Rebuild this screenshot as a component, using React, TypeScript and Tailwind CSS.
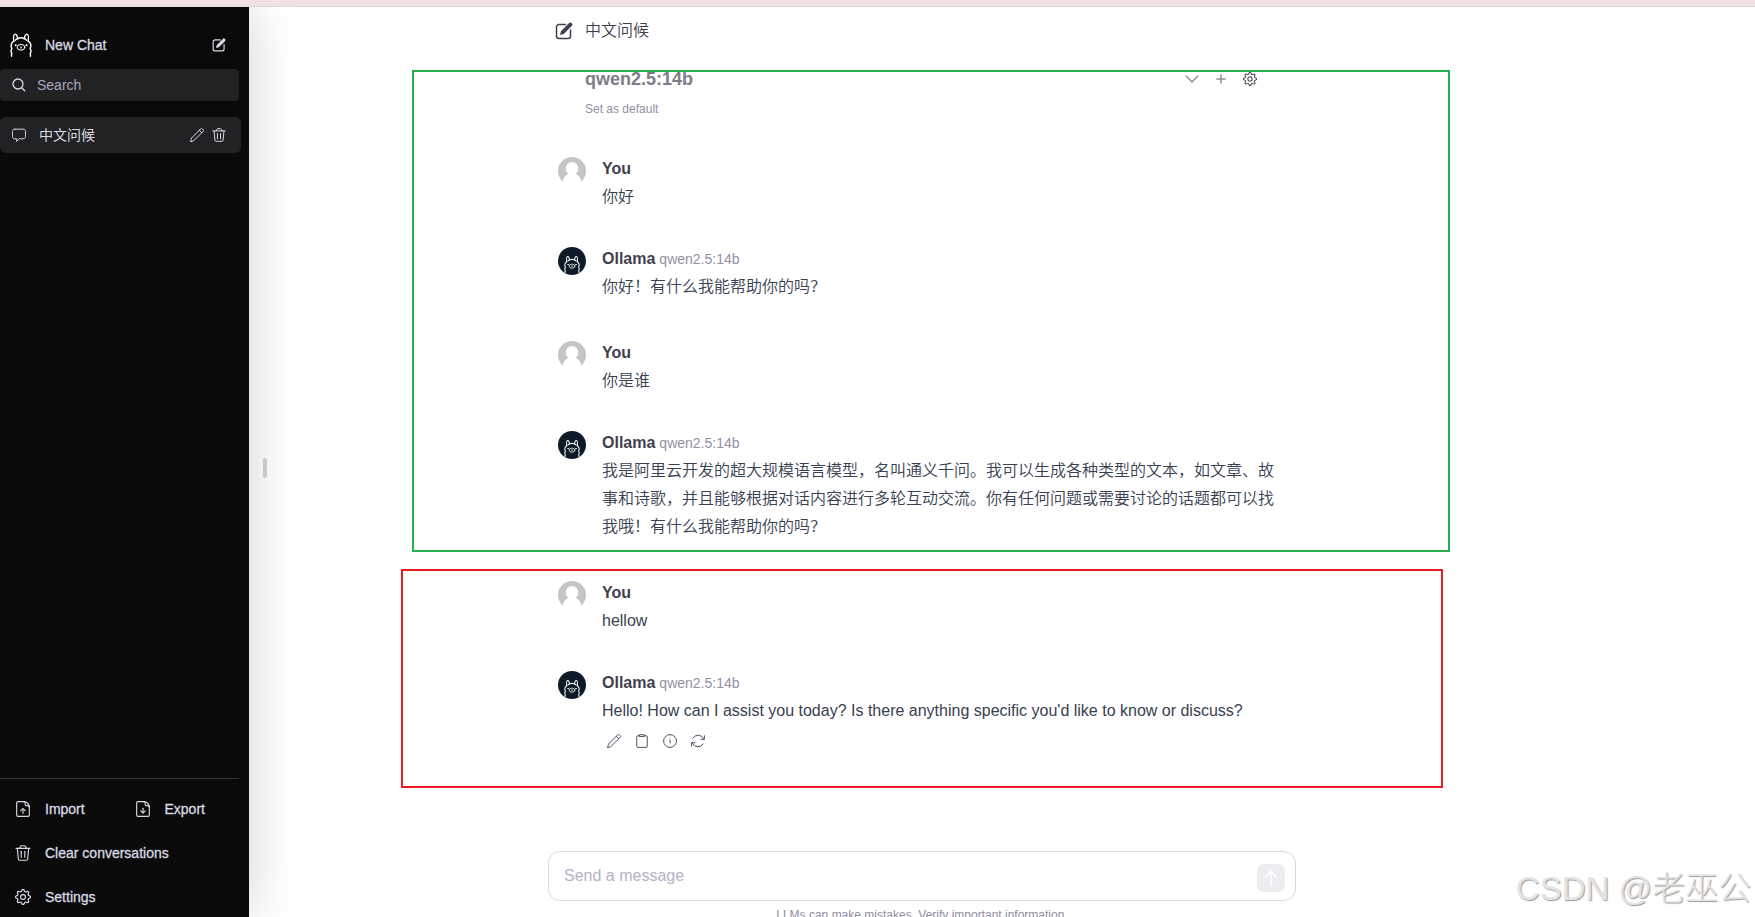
import React from "react";

type IconProps = { className?: string; d: string[]; bold?: boolean };

function Line({ className = "", d, bold }: IconProps) {
  return (
    <svg viewBox="0 0 24 24" fill="none" stroke="currentColor" strokeWidth={bold ? 2.6 : 1.7} strokeLinecap="round" strokeLinejoin="round" className={className} aria-hidden="true">
      {d.map((p) => (
        <path key={p} d={p} />
      ))}
    </svg>
  );
}

const PENCIL = ["M1 23l1.600-5.800L18.200 1.600a2.100 2.100 0 0 1 3 0l1.200 1.200a2.100 2.100 0 0 1 0 3L6.800 21.400z", "M16 4l4 4"];
const TRASH = ["M1.5 5h21", "M7 5l1.200-2.800A1.5 1.5 0 0 1 9.600 1.200h4.800a1.500 1.500 0 0 1 1.400 1L17 5", "M3.500 5l1.500 16a2 2 0 0 0 2 1.800h10a2 2 0 0 0 2-1.800L20.500 5", "M9.300 9.500v9", "M14.700 9.500v9"];
const CHAT = ["M5 2h14c2.700 0 4.200 1.500 4.200 4v8.500c0 2.500-1.500 4-4.200 4h-6.500L8 23v-4.500H5c-2.700 0-4.200-1.500-4.200-4V6c0-2.500 1.500-4 4.200-4z"];
const FILE = ["M13 1H4.500a2 2 0 0 0-2 2v18a2 2 0 0 0 2 2h15a2 2 0 0 0 2-2V9.500c0-5-3.500-8.500-8.500-8.500z", "M13 1c1.800 0 2.300 1.200 2.300 3v1.200c0 1.200.600 1.800 1.800 1.800h1.200c2 0 3.200.800 3.200 2.500"];
const UP = ["M12 18.500v-6.500", "M8.800 14.500l3.200-3.200 3.200 3.200"];
const DOWN = ["M12 11v6.500", "M8.800 14.800l3.200 3.200 3.200-3.200"];
const CLIP = ["M8 3H5a2 2 0 0 0-2 2v16a2 2 0 0 0 2 2h14a2 2 0 0 0 2-2V5a2 2 0 0 0-2-2h-3", "M8 1.200h8v3H8z"];
const INFO = ["M12 1a11 11 0 1 0 0 22a11 11 0 1 0 0-22z", "M11.300 11.500h1v4", "M12 8.500v.200"];
const REFRESH = ["M23 3v6h-6", "M22 8.500A10.800 10.800 0 0 0 3 7", "M1 21v-6h6", "M2 15.500A10.800 10.800 0 0 0 21 17"];

function Gear({ className = "" }: { className?: string }) {
  const points = Array.from({ length: 64 }, (_, i) => {
    const a = (i / 64) * Math.PI * 2;
    const r = 9.8 + 1.4 * Math.tanh(2.2 * Math.cos(8 * a));
    return `${(12 + r * Math.sin(a)).toFixed(2)},${(12 - r * Math.cos(a)).toFixed(2)}`;
  }).join(" ");
  return (
    <svg viewBox="0 0 24 24" fill="none" stroke="currentColor" strokeWidth="1.800" strokeLinejoin="round" className={className} aria-hidden="true">
      <polygon points={points} />
      <circle cx="12" cy="12" r="3.700" />
    </svg>
  );
}

function Compose({ className = "" }: { className?: string }) {
  return (
    <svg viewBox="0 0 18 18" fill="none" className={className} aria-hidden="true">
      <path d="M10.500 2.500H4A2.500 2.500 0 0 0 1.500 5v9A2.500 2.500 0 0 0 4 16.500h9a2.500 2.500 0 0 0 2.500-2.500V8" stroke="currentColor" strokeWidth="1.500" strokeLinecap="round" />
      <path d="M5 13l1-3.800 7.800-8a2 2 0 0 1 2.900 0 2 2 0 0 1 0 2.900L8.800 12z" fill="currentColor" />
    </svg>
  );
}

function Llama({ className = "" }: { className?: string }) {
  return (
    <svg viewBox="0 0 22 24" fill="none" stroke="currentColor" strokeWidth="1.400" strokeLinecap="round" strokeLinejoin="round" className={className} aria-hidden="true">
      <path d="M3.800 8.200C3.300 4.500 3.600 1.300 5 1.100c1.500-.200 2.400 1.900 2.600 4.600" />
      <path d="M18.200 8.200c.500-3.700.200-6.900-1.200-7.100-1.500-.200-2.400 1.900-2.600 4.600" />
      <path d="M5.300 7.300c.700-1.100 1.500-1.600 2.500-1.500C9.300 4.300 12.700 4.300 14.200 5.800c1-.100 1.800.400 2.500 1.500" />
      <path d="M3.800 8.200C1 9.800.500 13 1.900 15.400.800 17.300.900 19.300 1.900 20.700c-.500.800-.600 1.600-.300 2.500" />
      <path d="M18.200 8.200c2.800 1.600 3.300 4.800 1.900 7.200 1.100 1.900 1 3.900 0 5.300.500.800.600 1.600.300 2.500" />
      <ellipse cx="11" cy="14.300" rx="3.900" ry="2.900" strokeWidth="1" />
      <path d="M10.200 13.900l.800.600.8-.600M11 14.500v.900" strokeWidth=".800" />
      <circle cx="5.600" cy="12.200" r=".600" fill="currentColor" strokeWidth=".800" />
      <circle cx="16.400" cy="12.200" r=".600" fill="currentColor" strokeWidth=".800" />
    </svg>
  );
}

function Avatar({ user }: { user: boolean }) {
  if (!user) {
    return (
      <div className="flex size-7 shrink-0 items-end justify-center overflow-hidden rounded-full bg-[#0d1b28] text-white">
        <Llama className="h-[21px] w-4" />
      </div>
    );
  }
  return (
    <svg viewBox="0 0 28 28" className="size-7 shrink-0" aria-hidden="true">
      <circle cx="14" cy="14" r="14" fill="#c5c5c5" />
      <path d="M14 5a6.200 6.200 0 0 0-6.200 6.200c0 2.500 1 4.500 2.400 5.600C7.300 18 5.300 21 4.500 24.500V28h19v-3.500c-.800-3.500-2.800-6.500-5.700-7.700 1.400-1.100 2.400-3.100 2.400-5.600A6.200 6.200 0 0 0 14 5z" fill="#fff" />
    </svg>
  );
}

type Message = { user: boolean; text: string };

const messages: Message[] = [
  { user: true, text: "你好" },
  { user: false, text: "你好！有什么我能帮助你的吗？" },
  { user: true, text: "你是谁" },
  { user: false, text: "我是阿里云开发的超大规模语言模型，名叫通义千问。我可以生成各种类型的文本，如文章、故事和诗歌，并且能够根据对话内容进行多轮互动交流。你有任何问题或需要讨论的话题都可以找我哦！有什么我能帮助你的吗？" },
  { user: true, text: "hellow" },
  { user: false, text: "Hello! How can I assist you today? Is there anything specific you'd like to know or discuss?" },
];

const actions = [
  { label: "Edit", d: PENCIL },
  { label: "Copy", d: CLIP },
  { label: "Info", d: INFO },
  { label: "Regenerate", d: REFRESH },
];

function MessageRow({ message, last }: { message: Message; last: boolean }) {
  return (
    <article className={message.user ? "flex gap-4 pb-9" : "flex gap-4 pb-10"}>
      <Avatar user={message.user} />
      <div className="min-w-0 flex-1">
        <h2 className="mb-0.5 h-6 text-[16px] leading-6 font-bold text-[#3f3f4e]">
          {message.user ? "You" : "Ollama"}
          {!message.user && <span className="ml-1 text-[14px] font-normal text-[#9190a5]">qwen2.5:14b</span>}
        </h2>
        <p className="text-[16px] leading-7 font-[350] text-[#374151]">{message.text}</p>
        {last && (
          <div className="flex gap-3.5 pt-[9px] pl-[5px] text-[#4b5563]">
            {actions.map((a) => (
              <button key={a.label} type="button" aria-label={a.label} className="size-3.5">
                <Line d={a.d} className="size-3.5" />
              </button>
            ))}
          </div>
        )}
      </div>
    </article>
  );
}

function Sidebar() {
  return (
    <aside className="flex w-[249px] shrink-0 flex-col bg-[#0a0a0a] pt-[19px] text-[14px] text-[#d9d9e3] shadow-[0_0_50px_rgba(0,0,0,0.18)]">
      <button type="button" className="flex h-[38px] w-full items-center pr-[23px] pl-2.5 text-left">
        <Llama className="h-6 w-[22px] text-white" />
        <span className="ml-[13px] flex-1 [-webkit-text-stroke:0.3px]">New Chat</span>
        <Compose className="size-3.5" />
      </button>
      <label className="mt-[5px] mr-2.5 flex h-8 items-center rounded-[4px] bg-[#212224] pl-3">
        <svg viewBox="0 0 14 14" fill="none" stroke="currentColor" strokeWidth="1.300" strokeLinecap="round" className="size-3.5 shrink-0" aria-hidden="true">
          <circle cx="6" cy="6" r="5" />
          <path d="M9.700 9.700l3 3" />
        </svg>
        <input type="search" aria-label="Search" placeholder="Search" className="ml-[11px] w-full min-w-0 bg-transparent text-[14px] outline-none placeholder:text-[#a9a8bd]" />
      </label>
      <div className="mt-4 mr-2 flex h-9 items-center rounded-[6px] bg-[#212224] pr-[15px] pl-3">
        <Line d={CHAT} className="size-3.5" />
        <a href="#chat" className="ml-[13px] flex-1">中文问候</a>
        <button type="button" aria-label="Rename" className="size-3.5">
          <Line d={PENCIL} className="size-3.5" />
        </button>
        <button type="button" aria-label="Delete" className="ml-2 size-3.5">
          <Line d={TRASH} className="size-3.5" />
        </button>
      </div>
      <div className="mt-auto mr-2.5 -mb-0.5 border-t border-[#34343f] pt-2">
        <div className="grid grid-cols-2">
          <button type="button" className="flex h-11 items-center gap-3.5 pl-[15px] [-webkit-text-stroke:0.3px]">
            <Line d={[...FILE, ...UP]} className="size-4" />
            Import
          </button>
          <button type="button" className="flex h-11 items-center gap-3.5 pl-[15px] [-webkit-text-stroke:0.3px]">
            <Line d={[...FILE, ...DOWN]} className="size-4" />
            Export
          </button>
        </div>
        <button type="button" className="flex h-11 w-full items-center gap-3.5 pl-[15px] [-webkit-text-stroke:0.3px]">
          <Line d={TRASH} className="size-4" />
          Clear conversations
        </button>
        <button type="button" className="flex h-11 w-full items-center gap-3.5 pl-[15px] [-webkit-text-stroke:0.3px]">
          <Gear className="size-4" />
          Settings
        </button>
      </div>
    </aside>
  );
}

export default function App() {
  return (
    <div className="relative flex h-screen flex-col overflow-hidden bg-white font-['Liberation_Sans','Noto_Sans_CJK_SC',sans-serif]">
      <div className="h-[7px] shrink-0 border-b border-[#e6d5d5] bg-[#f1e2e1]" />
      <div className="flex min-h-0 flex-1 overflow-hidden">
        <Sidebar />
        <div className="flex w-8 shrink-0 items-center justify-center pt-3">
          <div className="h-5 w-1 rounded-full bg-[#c8c8cb]" />
        </div>
        <main className="flex min-w-0 flex-1 flex-col pl-[267px]">
          <div className="flex w-full max-w-[748px] flex-1 flex-col">
            <header className="flex h-12 items-center gap-3 pl-[7px] text-[16px] text-[#3f3f4e]">
              <Compose className="size-[18px]" />
              <h1 className="font-[350]">中文问候</h1>
            </header>
            <div className="flex h-12 items-center justify-between pr-[39px] pl-[37px]">
              <button type="button" className="text-[18px] leading-6 font-bold text-[#7d7d87]">qwen2.5:14b</button>
              <div className="flex items-center gap-[15px] text-[#8d8d9b]">
                <Line d={["M2 7l10 10L22 7"]} bold className="size-3.5" />
                <button type="button" aria-label="Add model" className="size-3.5">
                  <Line d={["M12 5v14", "M5 12h14"]} bold className="size-3.5" />
                </button>
                <button type="button" aria-label="Model settings" className="size-3.5 text-[#4c4c59]">
                  <Gear className="size-3.5" />
                </button>
              </div>
            </div>
            <button type="button" className="-mt-1 self-start pl-[37px] text-[12px] leading-5 text-[#9190a5]">Set as default</button>
            <section className="flex-1 pt-[38px] pr-[19px] pl-2.5">
              {messages.map((m, i) => (
                <MessageRow key={i} message={m} last={i === messages.length - 1} />
              ))}
            </section>
            <form className="shrink-0" onSubmit={(e) => e.preventDefault()}>
              <div className="flex h-[50px] items-center rounded-xl border border-[#d9d9e3] pr-2.5 pl-[15px]">
                <input type="text" aria-label="Message" placeholder="Send a message" className="min-w-0 flex-1 text-[16px] outline-none placeholder:text-[#b4b2c8]" />
                <button type="submit" aria-label="Send" className="mt-1 flex size-7 items-center justify-center rounded-[7px] bg-[#ececf1] text-white">
                  <Line d={["M12 22V3", "M3.500 11L12 2.500l8.500 8.500"]} bold className="size-4" />
                </button>
              </div>
              <p className="h-4 overflow-hidden pt-1 text-center text-[12px] leading-5 text-[#8e8ea0]">LLMs can make mistakes. Verify important information.</p>
            </form>
          </div>
        </main>
      </div>
      <div className="pointer-events-none absolute top-[70px] left-[412px] h-[482px] w-[1038px] border-2 border-[#22b14c]" />
      <div className="pointer-events-none absolute top-[569px] left-[401px] h-[219px] w-[1042px] border-2 border-[#ed1c24]" />
      <div className="pointer-events-none absolute right-1 bottom-1 text-[33px] font-light text-[#e4e4e4] [text-shadow:1px_1px_1px_#999]">CSDN @老巫公</div>
    </div>
  );
}
